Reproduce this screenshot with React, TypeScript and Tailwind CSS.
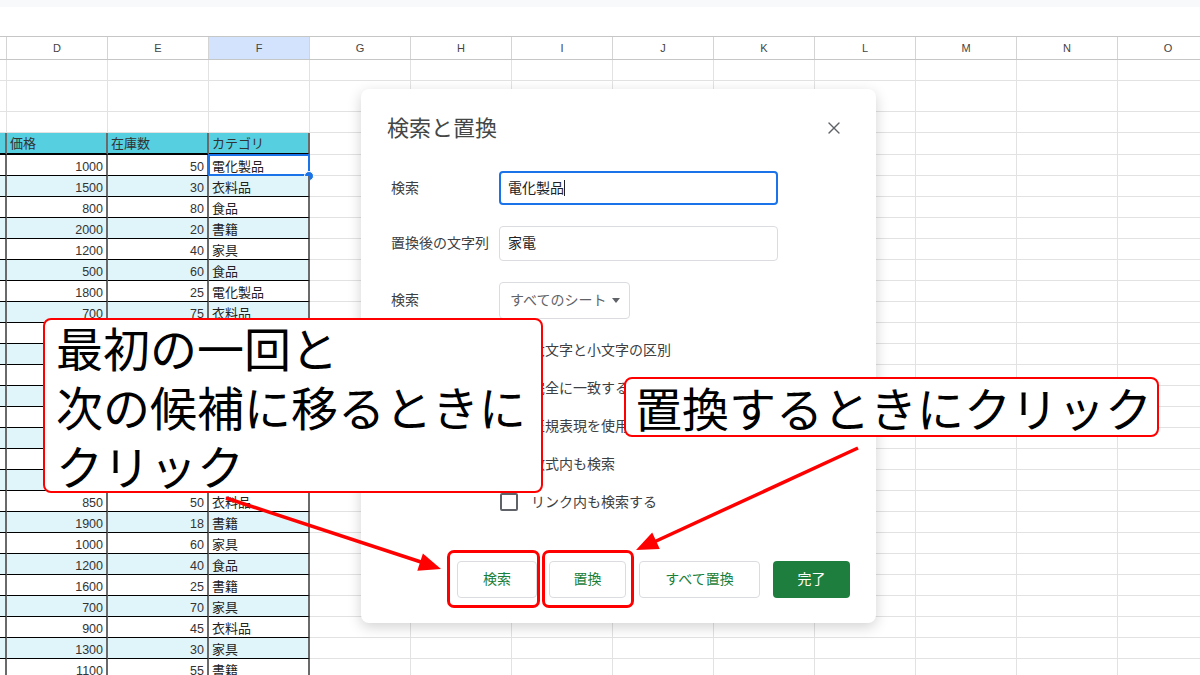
import React from "react";
import { X } from "lucide-react";

const COLS = ["D", "E", "F", "G", "H", "I", "J", "K", "L", "M", "N", "O"];
const EMPTY = ["G", "H", "I", "J", "K", "L", "M", "N", "O"];

const DATA: [string, string, string][] = [
  ["1000", "50", "電化製品"],
  ["1500", "30", "衣料品"],
  ["800", "80", "食品"],
  ["2000", "20", "書籍"],
  ["1200", "40", "家具"],
  ["500", "60", "食品"],
  ["1800", "25", "電化製品"],
  ["700", "75", "衣料品"],
  ["1100", "45", "書籍"],
  ["600", "90", "食品"],
  ["2200", "15", "電化製品"],
  ["950", "35", "家具"],
  ["1300", "55", "衣料品"],
  ["400", "100", "食品"],
  ["1700", "20", "電化製品"],
  ["1250", "30", "書籍"],
  ["850", "50", "衣料品"],
  ["1900", "18", "書籍"],
  ["1000", "60", "家具"],
  ["1200", "40", "食品"],
  ["1600", "25", "書籍"],
  ["700", "70", "家具"],
  ["900", "45", "衣料品"],
  ["1300", "30", "家具"],
  ["1100", "55", "書籍"],
];

function GridCells() {
  return (
    <>
      {EMPTY.map((c) => (
        <div key={c} className="w-[101px] shrink-0 border-r border-b border-[#e2e2e2]" />
      ))}
    </>
  );
}

function EmptyRow({ h }: { h: string }) {
  return (
    <div className={`flex ${h}`}>
      <div className="w-[7px] shrink-0 border-r border-b border-[#e2e2e2]" />
      {COLS.map((c) => (
        <div key={c} className="w-[101px] shrink-0 border-r border-b border-[#e2e2e2]" />
      ))}
    </div>
  );
}

function DataRow({ row, i }: { row: [string, string, string]; i: number }) {
  const bg = i % 2 === 1 ? "bg-[#e0f5f9]" : "bg-white";
  return (
    <div className="flex h-[21px]">
      <div className={`w-[7px] shrink-0 border-b border-black border-r-2 border-r-[#6a6a6a] ${bg}`} />
      <div
        className={`w-[101px] shrink-0 border-b border-black border-r-2 border-r-[#6a6a6a] flex items-end justify-end pr-[3px] pb-[0px] text-[12.5px] leading-[16px] text-[#333] ${bg}`}
      >
        {row[0]}
      </div>
      <div
        className={`w-[101px] shrink-0 border-b border-black border-r-2 border-r-[#6a6a6a] flex items-end justify-end pr-[3px] pb-[0px] text-[12.5px] leading-[16px] text-[#333] ${bg}`}
      >
        {row[1]}
      </div>
      <div
        className={`relative w-[101px] shrink-0 border-b border-black border-r-2 border-r-[#6a6a6a] flex items-end pl-[3px] pb-[0px] text-[13px] leading-[17px] text-[#222] ${bg}`}
      >
        {row[2]}
        {i === 0 && (
          <>
            <div className="absolute -left-px -top-px -right-[2px] -bottom-px border-2 border-[#1a73e8]" />
            <div className="absolute -right-[6px] -bottom-[6px] w-[10px] h-[10px] rounded-full bg-[#1a73e8] border border-white" />
          </>
        )}
      </div>
      <GridCells />
    </div>
  );
}

function Sheet() {
  return (
    <div className="flex flex-col font-['Liberation_Sans','Noto_Sans_CJK_JP',sans-serif]">
      <div className="h-[7px] bg-[#f8f9fa]" />
      <div className="h-[29px] bg-white" />
      <div className="flex h-[24px] border-y border-[#c4c7c5] bg-white">
        <div className="w-[7px] shrink-0 border-r border-[#d4d4d4]" />
        {COLS.map((c) => (
          <div
            key={c}
            className={`w-[101px] shrink-0 border-r border-[#d4d4d4] flex items-center justify-center text-[11px] text-[#444] ${
              c === "F" ? "bg-[#d3e3fd]" : "bg-white"
            }`}
          >
            {c}
          </div>
        ))}
      </div>
      <EmptyRow h="h-[21px]" />
      <EmptyRow h="h-[31px]" />
      <div className="flex h-[21px]">
        <div className="w-[7px] shrink-0 border-r border-b border-[#e2e2e2]" />
        {COLS.slice(0, 3).map((c) => (
          <div key={c} className="w-[101px] shrink-0 border-r border-b border-[#e2e2e2]" />
        ))}
        <GridCells />
      </div>
      <div className="flex h-[22px]">
        <div className="w-[7px] shrink-0 border-b-2 border-black border-r-2 border-r-[#6a6a6a] bg-[#56cfe0]" />
        {["価格", "在庫数", "カテゴリ"].map((t) => (
          <div
            key={t}
            className="w-[101px] shrink-0 border-b-2 border-black border-r-2 border-r-[#6a6a6a] bg-[#56cfe0] flex items-end pl-[3px] pb-[1px] text-[13px] leading-[17px] text-[#333]"
          >
            {t}
          </div>
        ))}
        <GridCells />
      </div>
      {DATA.map((r, i) => (
        <DataRow key={i} row={r} i={i} />
      ))}
    </div>
  );
}

function CheckRow({ label }: { label: string }) {
  return (
    <div className="flex items-center h-[38px] pl-[113px]">
      <div className="w-[18px] h-[18px] border-2 border-[#5f6368] rounded-[2px]" />
      <span className="ml-[13px] text-[14px] text-[#3c4043]">{label}</span>
    </div>
  );
}

function Dialog() {
  return (
    <div className="absolute left-[361px] top-[89px] w-[515px] h-[534px] bg-white rounded-[8px] shadow-[0_4px_14px_rgba(0,0,0,0.18)] font-['Roboto','Noto_Sans_CJK_JP',sans-serif]">
      <div className="flex flex-col px-[26px] pt-[19px]">
        <div className="flex items-center justify-between h-[40px]">
          <span className="text-[22px] text-[#444746]">検索と置換</span>
          <X className="w-[20px] h-[20px] mr-[6px] text-[#5f6368]" strokeWidth={1.6} />
        </div>

        <div className="flex items-center mt-[23px]">
          <span className="w-[112px] pl-[4px] text-[14px] text-[#3c4043]">検索</span>
          <div className="w-[279px] h-[34px] border-2 border-[#1a73e8] rounded-[4px] flex items-center pl-[7px] text-[14px] text-[#202124]">
            電化製品
            <span className="inline-block w-px h-[16px] bg-[#202124]" />
          </div>
        </div>

        <div className="flex items-center mt-[21px]">
          <span className="w-[112px] pl-[4px] text-[14px] text-[#3c4043]">置換後の文字列</span>
          <div className="w-[279px] h-[35px] border border-[#dadce0] rounded-[4px] flex items-center pl-[8px] text-[14px] text-[#202124]">
            家電
          </div>
        </div>

        <div className="flex items-center mt-[21px]">
          <span className="w-[112px] pl-[4px] text-[14px] text-[#3c4043]">検索</span>
          <div className="w-[131px] h-[37px] border border-[#dadce0] rounded-[4px] flex items-center pl-[10px] text-[14px] text-[#5f6368]">
            すべてのシート
            <svg width="8" height="5" viewBox="0 0 8 5" className="ml-[6px]">
              <path d="M0 0 L8 0 L4 5 Z" fill="#5f6368" />
            </svg>
          </div>
        </div>

        <div className="flex flex-col mt-[12px]">
          <CheckRow label="大文字と小文字の区別" />
          <CheckRow label="完全に一致するセルを検索" />
          <CheckRow label="正規表現を使用して検索" />
          <CheckRow label="数式内も検索" />
          <CheckRow label="リンク内も検索する" />
        </div>

        <div className="flex justify-end mt-[40px] text-[14px]">
          <div className="w-[80px] h-[37px] border border-[#dadce0] rounded-[4px] flex items-center justify-center text-[#188038]">
            検索
          </div>
          <div className="ml-[12px] w-[77px] h-[37px] border border-[#dadce0] rounded-[4px] flex items-center justify-center text-[#188038]">
            置換
          </div>
          <div className="ml-[13px] w-[121px] h-[37px] border border-[#dadce0] rounded-[4px] flex items-center justify-center text-[#188038]">
            すべて置換
          </div>
          <div className="ml-[13px] w-[77px] h-[37px] rounded-[4px] flex items-center justify-center bg-[#1e7e3e] text-white">
            完了
          </div>
        </div>
      </div>
    </div>
  );
}

function Annotations() {
  return (
    <>
      <div className="absolute left-[447px] top-[550px] w-[93px] h-[58px] border-[3px] border-[#ff0000] rounded-[7px]" />
      <div className="absolute left-[542px] top-[550px] w-[92px] h-[58px] border-[3px] border-[#ff0000] rounded-[7px]" />

      <svg className="absolute left-0 top-0" width="1200" height="675" viewBox="0 0 1200 675">
        <line x1="226" y1="498" x2="424" y2="563" stroke="#ff0000" strokeWidth="3.5" />
        <polygon points="441,569 417.3,570.7 422.9,553.5" fill="#ff0000" />
        <line x1="858" y1="448" x2="654" y2="542" stroke="#ff0000" strokeWidth="3.5" />
        <polygon points="636,550 652.2,532.6 659.8,549" fill="#ff0000" />
      </svg>

      <div className="absolute left-[43px] top-[318px] w-[500px] h-[175px] bg-white border-2 border-[#ff0000] rounded-[8px] pl-[11px] text-[47px] leading-[59px] -mt-0 text-black font-['Noto_Sans_CJK_JP',sans-serif]">
        <div className="-mt-[3px]">最初の一回と</div>
        <div>次の候補に移るときに</div>
        <div>クリック</div>
      </div>

      <div className="absolute left-[624px] top-[377px] w-[535px] h-[60px] bg-white border-2 border-[#ff0000] rounded-[8px] pl-[9px] flex items-center text-[47px] leading-[56px] text-black font-['Noto_Sans_CJK_JP',sans-serif]">
        置換するときにクリック
      </div>
    </>
  );
}

export default function App() {
  return (
    <div className="relative w-[1200px] h-[675px] overflow-hidden bg-white">
      <Sheet />
      <Dialog />
      <Annotations />
    </div>
  );
}
